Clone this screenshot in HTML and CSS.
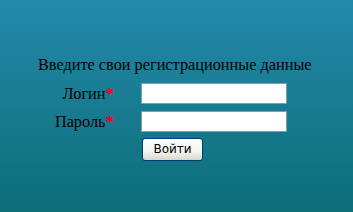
FILE: index.html
```html
<!DOCTYPE html>
<html>
<head>
<meta charset="utf-8">
<link rel="stylesheet" href="styles.css">
</head>
<body>
<div class="page">
  <form class="login">
    <div class="title">Введите свои регистрационные данные</div>
    <div class="grid">
      <label class="label">Логин<span class="req">*</span></label>
      <input class="field" type="text">
      <label class="label">Пароль<span class="req">*</span></label>
      <input class="field" type="password">
    </div>
    <div class="actions">
      <button class="btn" type="button">Войти</button>
    </div>
  </form>
</div>
</body>
</html>
```

FILE: styles.css
```css
html, body {
  margin: 0;
  padding: 0;
  height: 100%;
}
body {
  background: linear-gradient(to bottom, #2389ab 0%, #0d6e78 100%);
  font-family: "Liberation Serif", "Times New Roman", serif;
  color: #000;
}
.page {
  padding-top: 55px;
  padding-left: 38px;
}
.login {
  width: 272px;
  display: flex;
  flex-direction: column;
}
.title {
  font-size: 16.3px;
  line-height: 20px;
  text-align: center;
  white-space: nowrap;
}
.grid {
  margin-top: 8px;
  display: grid;
  grid-template-columns: 76px 146px;
  column-gap: 27px;
  row-gap: 7px;
  align-items: center;
}
.label {
  font-size: 16.3px;
  text-align: right;
  white-space: nowrap;
}
.req {
  color: #e8001c;
  font-weight: bold;
  font-size: 17px;
}
.field {
  box-sizing: border-box;
  width: 146px;
  height: 21px;
  margin: 0;
  padding: 1px 2px;
  border: 1px solid #7f9db9;
  background: #fff;
  outline: none;
}
.actions {
  margin-top: 6px;
  padding-right: 3px;
  display: flex;
  justify-content: center;
}
.btn {
  box-sizing: border-box;
  width: 61px;
  height: 23px;
  margin: 0;
  padding: 0 0 1px 0;
  border: 1px solid #003c74;
  border-radius: 3px;
  background: linear-gradient(to bottom, #ffffff 0%, #f4f4f0 60%, #d8d6cc 100%);
  font-family: "DejaVu Sans", Verdana, sans-serif;
  font-size: 12px;
  color: #000;
}
```
